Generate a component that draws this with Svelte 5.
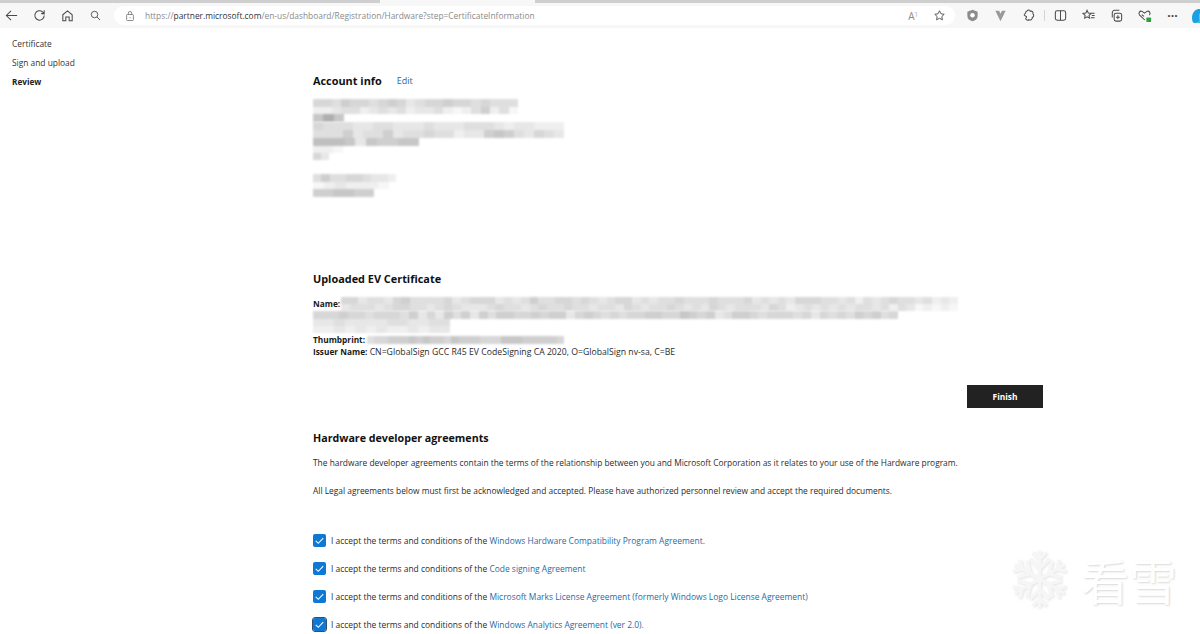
<script lang="ts">
  // each row of a redacted block: width, height, and one grey step per cell
  type Row = { w: number; h: number; cells: string };

  const shade = (c: string) => {
    const v = 255 - parseInt(c, 16) * 8;
    return `rgb(${v},${v},${v + 1})`;
  };

  const address: Row[] = [
    { w: 205, h: 8, cells: '5546554565345565545444' },
    { w: 205, h: 7, cells: '2234423434233421246241' },
    { w: 31, h: 8, cells: '7A7' },
  ];
  const address2: Row[] = [
    { w: 251, h: 8, cells: '5444334433343334443233222' },
    { w: 251, h: 8, cells: '4446344634454423367643543' },
    { w: 106, h: 8, cells: '8887376677' },
    { w: 30, h: 7, cells: '221' },
    { w: 16, h: 7, cells: '53' },
  ];
  const contact: Row[] = [
    { w: 83, h: 8, cells: '4644554332' },
    { w: 76, h: 7, cells: '1232221' },
    { w: 61, h: 8, cells: '667766' },
  ];
  const certName: Row[] = [
    { w: 617, h: 7, cells: '553443564444534555343464455454345534344544454445343435554434243454434232' },
    { w: 617, h: 7, cells: '344434554434543334544345445443443543445434354344435423434343443424312121' },
  ];
  const certName2: Row[] = [
    { w: 585, h: 8, cells: '5556554555463536463646655656635654545566557656346654555453545465645' },
    { w: 137, h: 7, cells: '3343333443344' },
    { w: 137, h: 7, cells: '2232323223233' },
  ];
  const thumb: Row[] = [{ w: 197, h: 8, cells: '4556667676657666555777666665' }];

  const agreements = [
    { link: 'Windows Hardware Compatibility Program Agreement.' },
    { link: 'Code signing Agreement' },
    { link: 'Microsoft Marks License Agreement (formerly Windows Logo License Agreement)' },
    { link: 'Windows Analytics Agreement (ver 2.0).', focused: true },
  ];

  const flakeAngles = [0, 60, 120, 180, 240, 300];
</script>

{#snippet mosaic(rows: Row[])}
  <div class="mosaic">
    {#each rows as row}
      <div class="mosaic-row" style="width:{row.w}px;height:{row.h}px">
        {#each row.cells.split('') as c}
          <i style="background:{shade(c)}"></i>
        {/each}
      </div>
    {/each}
  </div>
{/snippet}

<div class="page">
  <div class="tabstrip">
    <div class="tab-gap"></div>
  </div>

  <header class="toolbar">
    <div class="tool-left">
      <svg class="tb" viewBox="0 0 16 16"><path d="M14 8H2.500M7.500 3l-5 5 5 5"/></svg>
      <svg class="tb" viewBox="0 0 16 16"><path d="M13 8a5 5 0 1 1-1.600-3.700L13 6V2.500M13 6H9.800"/></svg>
      <svg class="tb" viewBox="0 0 16 16"><path d="M3 7.200 8 3l5 4.200v6.300H9.800v-4H6.200v4H3z"/></svg>
      <svg class="tb search" viewBox="0 0 16 16"><circle cx="6.800" cy="6.800" r="4"/><path d="m9.800 9.800 3.800 3.800"/></svg>
    </div>
    <div class="address">
      <svg class="lock" viewBox="0 0 16 16"><rect x="3.500" y="6" width="9" height="8" rx="1.200"/><path d="M5.800 6V4.200a2.200 2.200 0 0 1 4.400 0V6M8 9.500V11"/></svg>
      <span class="url">https://<b>partner.microsoft.com</b>/en-us/dashboard/Registration/Hardware?step=CertificateInformation</span>
      <span class="addr-actions">
        <span class="read">A<sup>ʼ)</sup></span>
        <svg class="tb small" viewBox="0 0 16 16"><path d="m8 2.200 1.800 3.700 4 .6-2.900 2.800.7 4L8 11.400l-3.600 1.900.7-4-2.900-2.800 4-.6z"/></svg>
      </span>
    </div>
    <div class="tool-right">
      <svg class="ext" viewBox="0 0 16 16"><path class="fill-grey" d="M8 1.800 13.500 4v4.500c0 3-2.400 4.900-5.500 5.700-3.100-.8-5.500-2.700-5.500-5.700V4z"/><circle cx="8" cy="7.600" r="2.400" fill="#fff"/></svg>
      <svg class="ext" viewBox="0 0 16 16"><path class="fill-grey2" d="M2.500 3h4L8 6l1.500-3h4L8 14z"/></svg>
      <svg class="tb" viewBox="0 0 16 16"><path d="M6.500 3.200c1-1.600 3-1.300 3.400.2 1.800-.4 3.500 1 2.800 2.900 1.400 1 1 3.200-.6 3.600.2 2-1.800 3.600-3.600 2.600-1.200.9-3 .4-3.400-1-.2-.7 1-1.400.8-2.300-.3-1-2.300-.5-2.500-1.700-.2-1 1.500-1.600 1.500-2.500 0-.8.400-1.300.8-1.300z"/></svg>
      <span class="divider"></span>
      <svg class="tb" viewBox="0 0 16 16"><rect x="2.500" y="3" width="11" height="10" rx="2"/><path d="M8 3v10"/></svg>
      <svg class="tb" viewBox="0 0 16 16"><path d="m6.500 2.500 1.300 2.800 3 .4-2.200 2.100.5 3-2.600-1.400-2.600 1.400.5-3-2.200-2.100 3-.4zM11 5.500h3.500M11.500 8h3M10.500 10.500h4"/></svg>
      <svg class="tb" viewBox="0 0 16 16"><path d="M11 2.500H6A2.500 2.500 0 0 0 3.500 5v5M7.500 5.500h4a2 2 0 0 1 2 2V12a2 2 0 0 1-2 2h-4a2 2 0 0 1-2-2V7.500a2 2 0 0 1 2-2zM9.500 7.800v4M7.500 9.800h4"/></svg>
      <svg class="tb" viewBox="0 0 16 16"><path d="M8.300 12.800 2.800 7.500C1 5.500 3 2.500 5.500 3.600L8 5.500l2.500-1.900c2.500-1.100 4.500 1.900 2.700 3.900"/><path d="m5 7 2.500 2"/><rect class="ok" x="10" y="10" width="5" height="5" rx="1"/></svg>
      <span class="dots">···</span>
      <svg class="copilot" viewBox="0 0 16 16"><path class="c1" d="M2 10C2 5 5 1 9 1h6c-4 0-5.500 4-5.500 7v3C9.500 15 6 15 4.500 15 3 15 2 13 2 10z"/><path class="c2" d="M9.500 7c3-1 6.500 0 6.500 4s-3 4-5 4H5c3 0 4.500-3 4.500-5z"/></svg>
    </div>
  </header>

  <div class="layout">
    <nav class="steps">
      <span>Certificate</span>
      <span>Sign and upload</span>
      <span class="current">Review</span>
    </nav>

    <main class="content">
      <div class="heading-row">
        <h2>Account info</h2>
        <a href="#edit">Edit</a>
      </div>
      {@render mosaic(address)}
      {@render mosaic(address2)}
      <div class="contact">{@render mosaic(contact)}</div>

      <section class="cert">
        <h2>Uploaded EV Certificate</h2>
        <div class="cert-name">
          <b>Name:</b>
          {@render mosaic(certName)}
        </div>
        {@render mosaic(certName2)}
        <div class="cert-line thumb">
          <b>Thumbprint:</b>
          {@render mosaic(thumb)}
        </div>
        <div class="cert-line"><b>Issuer Name:</b> <span class="issuer">CN=GlobalSign GCC R45 EV CodeSigning CA 2020, O=GlobalSign nv-sa, C=BE</span></div>
      </section>

      <div class="actions"><button>Finish</button></div>

      <section class="legal">
        <h2>Hardware developer agreements</h2>
        <p>The hardware developer agreements contain the terms of the relationship between you and Microsoft Corporation as it relates to your use of the Hardware program.</p>
        <p>All Legal agreements below must first be acknowledged and accepted. Please have authorized personnel review and accept the required documents.</p>
        <ul>
          {#each agreements as a}
            <li>
              <span class="check" class:focused={a.focused}>
                <svg viewBox="0 0 14 14"><path d="m3 7.300 2.700 2.700L11 4.500"/></svg>
              </span>
              <span>I accept the terms and conditions of the <a href="#doc">{a.link}</a></span>
            </li>
          {/each}
        </ul>
      </section>
    </main>
  </div>

  <div class="watermark">
    <svg viewBox="0 0 64 64">
      {#each flakeAngles as angle}
        <path d="M32 32V2M32 11l-7-7M32 11l7-7M32 21l-10-10M32 21l10-10" transform="rotate({angle} 32 32)"/>
      {/each}
    </svg>
    <span>看雪</span>
  </div>
</div>

<style>
  :global(body) {
    margin: 0;
    background: #fff;
    overflow: hidden;
  }

  .page {
    position: relative;
    height: 634px;
    overflow: hidden;
    font-family: "Open Sans", "Liberation Sans", sans-serif;
    font-size: 8.400px;
    color: #2b2b2b;
  }

  b {
    font-size: 8.300px;
  }

  .tabstrip {
    height: 3px;
    background: #cfcfcf;
    position: relative;
  }

  .tab-gap {
    position: absolute;
    left: 380px;
    width: 155px;
    top: 0;
    bottom: 0;
    background: #f7f7f7;
  }

  .toolbar {
    height: 25px;
    background: #f7f7f7;
    display: flex;
    align-items: center;
  }

  .tool-left {
    display: flex;
    align-items: center;
    gap: 13px;
    padding-left: 4px;
    width: 109px;
    flex: none;
    box-sizing: border-box;
  }

  .tb {
    width: 15px;
    height: 15px;
    flex: none;
    fill: none;
    stroke: #4a4a4a;
    stroke-width: 1.100;
  }

  .tb.search {
    width: 13px;
    height: 13px;
    margin-left: 1px;
  }

  .tb.small {
    width: 13px;
    height: 13px;
  }

  .address {
    width: 841px;
    height: 19px;
    flex: none;
    border-radius: 10px;
    background: #fff;
    display: flex;
    align-items: center;
    margin-left: 5px;
    padding: 0 9px 0 10px;
    box-sizing: border-box;
  }

  .lock {
    width: 12px;
    height: 12px;
    fill: none;
    stroke: #666;
    stroke-width: 1;
  }

  .url {
    margin-left: 9px;
    color: #8a8a8a;
    white-space: nowrap;
  }

  .url b {
    font-size: inherit;
    font-weight: 400;
    color: #333;
  }

  .addr-actions {
    display: flex;
    align-items: center;
    gap: 16px;
    margin-left: auto;
  }

  .read {
    color: #8a8a8a;
    font-size: 10px;
  }

  .read sup {
    font-size: 5px;
  }

  .tool-right {
    display: flex;
    align-items: center;
    margin-left: 10px;
    gap: 13px;
    flex: none;
  }

  .ext {
    width: 15px;
    height: 15px;
    flex: none;
  }

  .fill-grey {
    fill: #8c8c8c;
  }

  .fill-grey2 {
    fill: #9a9a9a;
  }

  .divider {
    width: 1px;
    height: 11px;
    background: #d5d5d5;
    margin: 0 -5px;
  }

  .ok {
    fill: #2f9e44;
    stroke: none;
  }

  .dots {
    font-size: 12px;
    font-weight: 700;
    color: #444;
    width: 15px;
    text-align: center;
  }

  .copilot {
    width: 16px;
    height: 16px;
    flex: none;
    margin-left: -3px;
  }

  .c1 {
    fill: #1aa0e6;
  }

  .c2 {
    fill: #35c3c9;
  }

  .layout {
    display: flex;
  }

  .steps {
    width: 313px;
    flex: none;
    display: flex;
    flex-direction: column;
    gap: 7px;
    padding: 10px 0 0 12px;
    box-sizing: border-box;
    color: #333;
  }

  .steps span {
    line-height: 12px;
  }

  .steps .current {
    font-weight: 700;
    font-size: 8.200px;
    color: #222;
  }

  .content {
    width: 730px;
    padding-top: 45px;
  }

  h2 {
    margin: 0;
    font-size: 10.900px;
    font-weight: 700;
    color: #111;
    line-height: 15px;
  }

  .heading-row {
    display: flex;
    gap: 15px;
    align-items: center;
    height: 15px;
    margin-bottom: 11px;
  }

  .heading-row a {
    font-size: 9px;
  }

  a {
    color: #1f6aa5;
    text-decoration: none;
  }

  .mosaic {
    filter: blur(0.800px);
  }

  .mosaic-row {
    display: flex;
  }

  .mosaic-row i {
    flex: 1;
  }

  .contact {
    margin-top: 14px;
  }

  .cert {
    margin-top: 74px;
  }

  .cert h2 {
    margin-bottom: 11px;
  }

  .cert-name {
    display: flex;
    gap: 1px;
    line-height: 14px;
  }

  .cert-name b,
  .cert-line b {
    color: #1a1a1a;
  }

  .cert-line {
    line-height: 12px;
    white-space: nowrap;
  }

  .issuer {
    font-size: 8.700px;
  }

  .cert-line.thumb {
    display: flex;
    align-items: center;
    gap: 2px;
    margin-top: 1px;
  }

  .actions {
    display: flex;
    justify-content: flex-end;
    margin-top: 27px;
  }

  button {
    width: 76px;
    height: 23px;
    border: none;
    background: #222;
    color: #fff;
    font: 700 8.400px "Open Sans", "Liberation Sans", sans-serif;
  }

  .legal {
    margin-top: 23px;
  }

  .legal h2 {
    font-size: 10.700px;
    margin-bottom: 11px;
  }

  .legal p {
    margin: 0 0 16px;
    line-height: 12px;
    white-space: nowrap;
  }

  ul {
    list-style: none;
    margin: 36px 0 0;
    padding: 0;
    display: flex;
    flex-direction: column;
    gap: 14px;
  }

  li {
    display: flex;
    align-items: center;
    gap: 5px;
    white-space: nowrap;
    height: 14px;
    font-size: 8.450px;
  }

  .check {
    width: 13px;
    height: 13px;
    border-radius: 2px;
    background: #0f78d4;
    display: flex;
    flex: none;
  }

  .check.focused {
    outline: 1px solid #34506e;
  }

  .check svg {
    width: 13px;
    height: 13px;
    fill: none;
    stroke: #fff;
    stroke-width: 1.100;
  }

  .watermark {
    position: absolute;
    left: 1009px;
    top: 548px;
    display: flex;
    align-items: center;
    gap: 11px;
    pointer-events: none;
  }

  .watermark svg {
    width: 61px;
    height: 62px;
    fill: none;
    stroke: #f6f6f6;
    stroke-width: 3.500;
    filter: drop-shadow(1px 1px 1px #e4e4e4);
  }

  .watermark span {
    font-family: "Noto Sans CJK SC", sans-serif;
    font-size: 48px;
    line-height: 60px;
    color: #fff;
    text-shadow: 1px 1px 2px #d8d8d8;
  }
</style>
